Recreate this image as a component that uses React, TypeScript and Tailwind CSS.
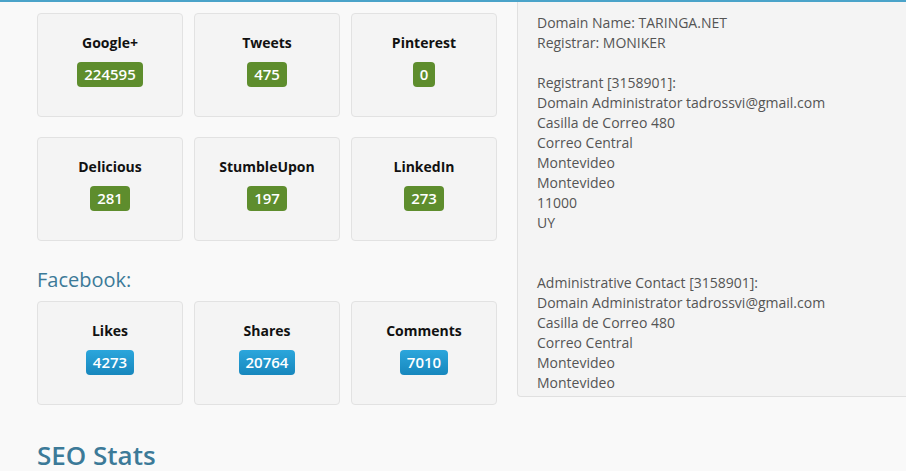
type Stat = { label: string; value: string }

const shares: Stat[] = [
  { label: 'Google+', value: '224595' },
  { label: 'Tweets', value: '475' },
  { label: 'Pinterest', value: '0' },
  { label: 'Delicious', value: '281' },
  { label: 'StumbleUpon', value: '197' },
  { label: 'LinkedIn', value: '273' },
]

const facebook: Stat[] = [
  { label: 'Likes', value: '4273' },
  { label: 'Shares', value: '20764' },
  { label: 'Comments', value: '7010' },
]

const whois = [
  'Domain Name: TARINGA.NET',
  'Registrar: MONIKER',
  '',
  'Registrant [3158901]:',
  'Domain Administrator tadrossvi@gmail.com',
  'Casilla de Correo 480',
  'Correo Central',
  'Montevideo',
  'Montevideo',
  '11000',
  'UY',
  '',
  '',
  'Administrative Contact [3158901]:',
  'Domain Administrator tadrossvi@gmail.com',
  'Casilla de Correo 480',
  'Correo Central',
  'Montevideo',
  'Montevideo',
]

function StatCard({ stat, blue }: { stat: Stat; blue?: boolean }) {
  return (
    <div className="flex h-[104px] w-[146px] flex-col items-center rounded-[4px] border border-[#e2e2e2] bg-[#f4f4f4] pt-[19px]">
      <div className="text-[14px] font-bold leading-[20px] text-[#111]">{stat.label}</div>
      <span
        className={
          blue
            ? 'mt-[9px] rounded-[4px] bg-gradient-to-b from-[#2ba6dc] to-[#1787bd] px-[7px] text-[15px] font-semibold leading-[25px] text-white'
            : 'mt-[9px] rounded-[4px] bg-[#5e8d2d] px-[7px] text-[15px] font-semibold leading-[25px] text-white'
        }
      >
        {stat.value}
      </span>
    </div>
  )
}

export default function App() {
  return (
    <div
      className="h-[471px] w-[906px] overflow-hidden border-t-2 border-[#4aa3c9] bg-[#f9f9f9]"
      style={{ fontFamily: '"Open Sans", "Liberation Sans", sans-serif' }}
    >
      <div className="flex">
        <div className="w-[517px] shrink-0 pl-[37px] pt-[11px]">
          <div className="grid w-[460px] grid-cols-[146px_146px_146px] gap-x-[11px] gap-y-[20px]">
            {shares.map((s) => (
              <StatCard key={s.label} stat={s} />
            ))}
          </div>

          <h3 className="mt-[25px] text-[20px] leading-[28px] text-[#3c7a98]">Facebook:</h3>
          <div className="mt-[7px] grid w-[460px] grid-cols-[146px_146px_146px] gap-x-[11px]">
            {facebook.map((s) => (
              <StatCard key={s.label} stat={s} blue />
            ))}
          </div>

          <h2 className="mt-[34px] text-[26px] font-semibold leading-[32px] text-[#3c7a98]">SEO Stats</h2>
        </div>

        <div className="h-[395px] w-[400px] shrink-0 overflow-hidden rounded-bl-[4px] border border-t-0 border-[#e0e0e0] bg-[#f4f4f4] pl-[19px] pt-[11px] text-[14px] leading-[20px] text-[#555]">
          {whois.map((line, i) => (
            <div key={i} className="h-[20px] whitespace-pre">
              {line}
            </div>
          ))}
        </div>
      </div>
    </div>
  )
}
